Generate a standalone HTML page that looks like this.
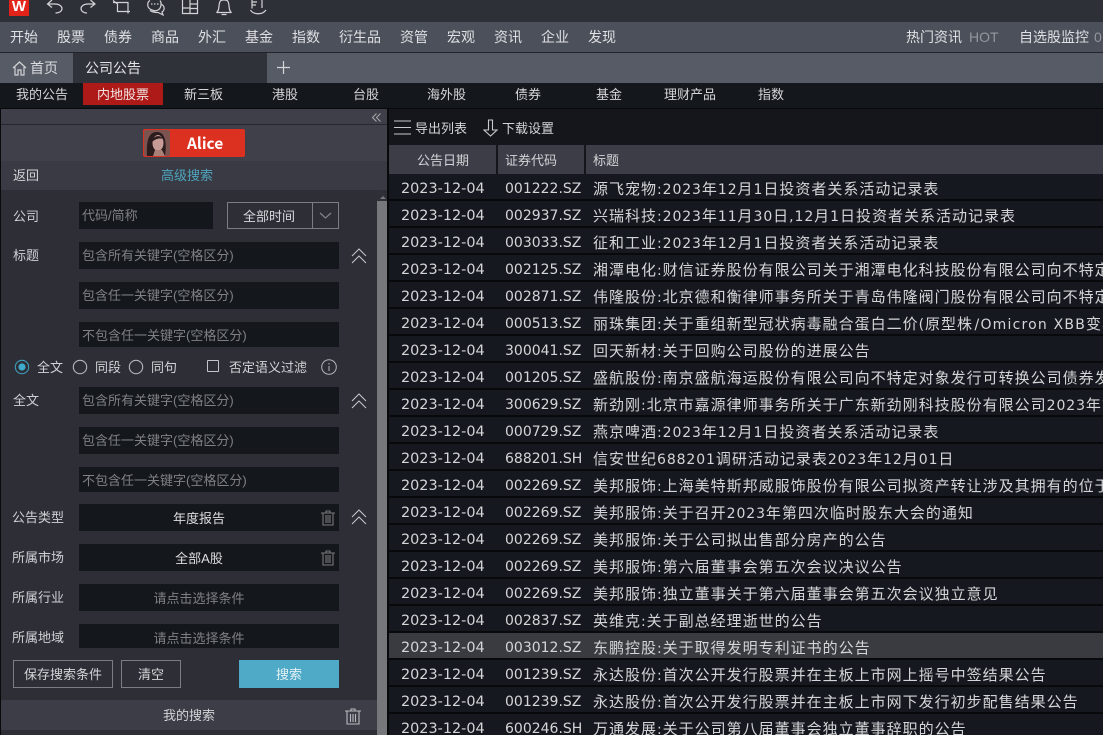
<!DOCTYPE html>
<html lang="zh"><head><meta charset="utf-8"><title>公司公告</title>
<style>
html,body{margin:0;padding:0;background:#000}
#p{position:relative;width:1103px;height:735px;overflow:hidden;background:#08090b;font-family:"Liberation Sans","Noto Sans CJK SC",sans-serif;font-size:13px;color:#d8d9dc}
#p div,#p span.a,#p svg{position:absolute}
.t{position:absolute;white-space:nowrap;line-height:18px;height:18px}
.m{top:28px;color:#dfe0e3;font-size:14px}
.s{top:86px;color:#d5d6d9}
.l{left:13px;color:#cfd0d4}
.i{left:79px;width:260px;background:#14171c;height:27px}
.ph{color:#7e8085;line-height:27px;white-space:nowrap;position:absolute;left:3px;top:0}
.c{color:#7e8085;line-height:27px;text-align:center;width:100%;position:absolute;left:0;top:0}
.r{left:389px;width:714px;height:25px;background:#15181e;font-family:"DejaVu Sans","Noto Sans CJK SC",sans-serif;font-size:14px;color:#d4d5d8;white-space:nowrap;line-height:25px}
.r span{position:absolute;top:3px}
.r .d{left:12px;font-size:14.4px}
.r .n{left:116px;font-size:14px}
.r .h{left:204px;font-size:15px;letter-spacing:1px}
.r .h i{font-style:normal;font-size:14px;letter-spacing:.9px}
.ic{fill:none;stroke:#d2d3d6;stroke-width:1.2}
</style></head><body><div id="p">

<div style="left:0;top:0;width:1103px;height:22px;background:#2d3037"></div>
<div style="left:9px;top:0;width:20px;height:16px;background:#e2231a;color:#fff;font:bold 15px/14px 'Liberation Sans',sans-serif;text-align:center">W</div>
<svg style="left:0;top:0" width="280" height="22" class="ic" viewBox="0 0 280 22">
<path d="M52 0 L47.5 4 L52 7.5 M48 4 H55 C59.5 4 62 6.5 62 8.5 C62 11 59.5 13 55.5 13"/>
<path d="M90.5 0 L95 4 L90.5 7.5 M94.5 4 H88 C83.5 4 81 6.5 81 8.5 C81 11 83.5 13 87 13"/>
<path d="M113 0.5 L117.5 4 V11.5 H130 M113 2.5 H128 V13.5"/>
<path d="M150 0.5 C147 2 147 7 150 9 C153 11 156 11 158 10 C161 8.5 162 3 160 0.5 M161 4 C165 6 165 10 162 12 L163 15 L158 12.5 C155 12.5 152 12 150 10.5 M151 4h1.5M154 4h1.5M157 4h1.5"/>
<path d="M182.5 0 V13.5 H197.5 V0 M190 0 V13.5 M190 4 H197.5 M190 8.5 H197.5 M182.5 8 H190"/>
<path d="M216.5 12.5 C219.5 11 218.5 6 219.5 3 C220 0.5 221 0 224 0 C227 0 228 0.5 228.5 3 C229.5 6 228.5 11 231.5 12.5 Z M221.5 14.5 H226.5"/>
<path d="M252 0 V8.5 M252 2 H257 M252 5 H256 M262 0 V8 M250.5 10 C253 14.5 262 15.5 266 10"/>
</svg>

<div style="left:0;top:22px;width:1103px;height:30px;background:#4b505a"></div>
<div style="left:0;top:52px;width:1103px;height:1px;background:#22242a"></div>
<span class="t m" style="left:10px">开始</span><span class="t m" style="left:57px">股票</span><span class="t m" style="left:104px">债券</span><span class="t m" style="left:151px">商品</span><span class="t m" style="left:198px">外汇</span><span class="t m" style="left:245px">基金</span><span class="t m" style="left:292px">指数</span><span class="t m" style="left:339px">衍生品</span><span class="t m" style="left:400px">资管</span><span class="t m" style="left:447px">宏观</span><span class="t m" style="left:494px">资讯</span><span class="t m" style="left:541px">企业</span><span class="t m" style="left:588px">发现</span>
<span class="t m" style="left:906px">热门资讯</span><span class="t m" style="left:969px;color:#94979d">HOT</span><span class="t m" style="left:1019px">自选股监控</span><span class="t m" style="left:1094px;color:#94979d">0</span>

<div style="left:0;top:53px;width:1103px;height:30px;background:#565b65"></div>
<div style="left:73px;top:53px;width:194px;height:30px;background:#2f3239"></div>
<svg style="left:12px;top:61px" width="15" height="15" class="ic" viewBox="0 0 15 15"><path d="M1 7 L7.5 1 L14 7 M3 6 V14 H6 V9 H9 V14 H12 V6"/></svg>
<span class="t" style="left:30px;top:59px;font-size:14px;color:#dadbde">首页</span>
<span class="t" style="left:85px;top:59px;font-size:14px;color:#e2e3e6">公司公告</span>
<svg style="left:277px;top:61px" width="13" height="13" viewBox="0 0 13 13"><path d="M6.5 0 V13 M0 6.5 H13" stroke="#d5d6d9" stroke-width="1.2"/></svg>

<div style="left:0;top:83px;width:1103px;height:25px;background:#14171c"></div>
<div style="left:83px;top:83px;width:80px;height:22px;background:#ad1a17"></div>
<span class="t s" style="left:16px">我的公告</span><span class="t s" style="left:97px;color:#f2e5e5">内地股票</span><span class="t s" style="left:184px">新三板</span><span class="t s" style="left:272px">港股</span><span class="t s" style="left:353px">台股</span><span class="t s" style="left:427px">海外股</span><span class="t s" style="left:515px">债券</span><span class="t s" style="left:596px">基金</span><span class="t s" style="left:664px">理财产品</span><span class="t s" style="left:758px">指数</span>

<div style="left:1px;top:109px;width:386px;height:15px;background:#3e3f48"></div>
<div style="left:1px;top:124px;width:386px;height:1px;background:#26272d"></div>
<svg style="left:372px;top:113px" width="9" height="9" viewBox="0 0 9 9"><path d="M4.5 0.5 L0.5 4.5 L4.5 8.5 M8.5 0.5 L4.5 4.5 L8.5 8.5" fill="none" stroke="#a9aaae" stroke-width="1"/></svg>
<div style="left:1px;top:125px;width:386px;height:36px;background:#3f4049"></div>
<div style="left:143px;top:129px;width:102px;height:28px;background:#dc3121;border-radius:2px"></div>
<svg style="left:144px;top:130px" width="26" height="26" viewBox="0 0 26 26"><rect width="26" height="26" rx="2" fill="#7d5350"/><path d="M3 26 C2 10 5 2 13 2 C21 2 23 12 21 26 Z" fill="#2b1c1e"/><ellipse cx="14" cy="13" rx="5.5" ry="8" fill="#c89c96"/><path d="M8 12 C9 6 15 4 20 9 C17 8 12 8 8 12Z" fill="#2b1c1e"/><path d="M11 20 L18 20 L21 26 H9Z" fill="#a98078"/></svg>
<span class="t" style="left:187px;top:134px;color:#fff;font:bold 15.5px/18px 'Noto Sans CJK SC','Liberation Sans',sans-serif">Alice</span>
<div style="left:1px;top:161px;width:386px;height:29px;background:#393a43"></div>
<span class="t" style="left:13px;top:167px;color:#d3d4d7">返回</span>
<span class="t" style="left:161px;top:167px;color:#4ea5bf">高级搜索</span>

<div style="left:1px;top:190px;width:376px;height:545px;background:#2d2e36"></div>
<div style="left:377px;top:190px;width:10px;height:545px;background:#76777a"></div>
<div style="left:377px;top:190px;width:10px;height:11px;background:#2f3037"></div>
<div style="left:380px;top:196px;width:0;height:0;border:3px solid transparent;border-top:0;border-bottom:3px solid #77787d"></div>

<span class="t l" style="top:208px">公司</span>
<div class="i" style="top:202px;width:134px"><span class="ph">代码/简称</span></div>
<div style="left:227px;top:202px;width:110px;height:25px;border:1px solid #7c7d82"></div>
<div style="left:312px;top:203px;width:1px;height:25px;background:#7c7d82"></div>
<span class="t" style="left:243px;top:208px;color:#d8d9dc">全部时间</span>
<svg style="left:319px;top:212px" width="13" height="8" viewBox="0 0 13 8"><path d="M1 1 L6.5 6 L12 1" fill="none" stroke="#85868a" stroke-width="1.2"/></svg>

<span class="t l" style="top:247px">标题</span>
<div class="i" style="top:242px"><span class="ph">包含所有关键字(空格区分)</span></div>
<div class="i" style="top:282px"><span class="ph">包含任一关键字(空格区分)</span></div>
<div class="i" style="top:322px;height:25px"><span class="ph">不包含任一关键字(空格区分)</span></div>
<svg style="left:351px;top:248px" width="16" height="16" viewBox="0 0 16 16"><path d="M1 8 L8 1 L15 8 M1 15 L8 8 L15 15" fill="none" stroke="#c9cacd" stroke-width="1"/></svg>

<svg style="left:14px;top:359px" width="16" height="16" viewBox="0 0 16 16"><circle cx="8" cy="8" r="6.7" fill="none" stroke="#3f9bb8" stroke-width="1.1"/><circle cx="8" cy="8" r="3.6" fill="#3fa9c9"/></svg>
<span class="t" style="left:37px;top:359px;color:#d3d4d7">全文</span>
<svg style="left:72px;top:359px" width="16" height="16" viewBox="0 0 16 16"><circle cx="8" cy="8" r="6.7" fill="none" stroke="#b5b6b9" stroke-width="1.1"/></svg>
<span class="t" style="left:95px;top:359px;color:#d3d4d7">同段</span>
<svg style="left:128px;top:359px" width="16" height="16" viewBox="0 0 16 16"><circle cx="8" cy="8" r="6.7" fill="none" stroke="#b5b6b9" stroke-width="1.1"/></svg>
<span class="t" style="left:151px;top:359px;color:#d3d4d7">同句</span>
<div style="left:207px;top:360px;width:10px;height:10px;border:1px solid #c5c6c9;border-radius:1px"></div>
<span class="t" style="left:229px;top:359px;color:#d3d4d7">否定语义过滤</span>
<svg style="left:320px;top:359px" width="18" height="16" viewBox="0 0 18 16"><circle cx="9" cy="8" r="7.3" fill="none" stroke="#b5b6b9" stroke-width="1"/><path d="M9 4 V5.5 M9 7 V12" stroke="#b5b6b9" stroke-width="1"/></svg>

<span class="t l" style="top:392px">全文</span>
<div class="i" style="top:387px"><span class="ph">包含所有关键字(空格区分)</span></div>
<div class="i" style="top:427px"><span class="ph">包含任一关键字(空格区分)</span></div>
<div class="i" style="top:467px;height:25px"><span class="ph">不包含任一关键字(空格区分)</span></div>
<svg style="left:351px;top:393px" width="16" height="16" viewBox="0 0 16 16"><path d="M1 8 L8 1 L15 8 M1 15 L8 8 L15 15" fill="none" stroke="#c9cacd" stroke-width="1"/></svg>

<span class="t l" style="left:12px;top:509px">公告类型</span>
<div class="i" style="top:504px"><span class="c" style="color:#dcdde0;left:-10px;top:1px;width:260px">年度报告</span></div>
<svg style="left:321px;top:510px" width="14" height="16" viewBox="0 0 14 16" fill="none" stroke="#77787c" stroke-width="1.1"><path d="M0 3 H14 M5 3 V1 H9 V3 M2 3 V15 H12 V3 M5 5 V13 M7 5 V13 M9 5 V13"/></svg>
<svg style="left:351px;top:509px" width="16" height="16" viewBox="0 0 16 16"><path d="M1 8 L8 1 L15 8 M1 15 L8 8 L15 15" fill="none" stroke="#c9cacd" stroke-width="1"/></svg>

<span class="t l" style="left:12px;top:549px">所属市场</span>
<div class="i" style="top:544px"><span class="c" style="color:#dcdde0;left:-10px;top:1px;width:260px">全部A股</span></div>
<svg style="left:321px;top:550px" width="14" height="16" viewBox="0 0 14 16" fill="none" stroke="#77787c" stroke-width="1.1"><path d="M0 3 H14 M5 3 V1 H9 V3 M2 3 V15 H12 V3 M5 5 V13 M7 5 V13 M9 5 V13"/></svg>

<span class="t l" style="left:12px;top:589px">所属行业</span>
<div class="i" style="top:584px"><span class="c" style="left:-10px;top:1px;width:260px">请点击选择条件</span></div>
<span class="t l" style="left:12px;top:629px">所属地域</span>
<div class="i" style="top:624px;height:24px"><span class="c" style="left:-10px;top:1px;width:260px">请点击选择条件</span></div>

<div style="left:13px;top:660px;width:98px;height:26px;border:1px solid #7c7d82;text-align:center;line-height:28px;color:#d3d4d7">保存搜索条件</div>
<div style="left:121px;top:660px;width:58px;height:26px;border:1px solid #7c7d82;text-align:center;line-height:28px;color:#d3d4d7">清空</div>
<div style="left:239px;top:660px;width:100px;height:28px;background:#4eaac7;text-align:center;line-height:29px;color:#e3f0f4">搜索</div>

<div style="left:1px;top:700px;width:376px;height:30px;background:#3c3d46"></div>
<span class="t" style="left:163px;top:707px;color:#d3d4d7">我的搜索</span>
<svg style="left:345px;top:708px" width="16" height="17" viewBox="0 0 16 17" fill="none" stroke="#b9babd" stroke-width="1.1"><path d="M0 3 H16 M6 3 V1 H10 V3 M2 3 V16 H14 V3 M5.5 6 V14 M8 6 V14 M10.5 6 V14"/></svg>

<div style="left:389px;top:109px;width:714px;height:36px;background:#14161b"></div>
<svg style="left:394px;top:120px" width="17" height="15" viewBox="0 0 17 15"><path d="M0 1 H17 M0 7.5 H17 M0 14 H17" stroke="#c9cacd" stroke-width="1.1"/></svg>
<span class="t" style="left:415px;top:120px;color:#d3d4d7">导出列表</span>
<svg style="left:483px;top:119px" width="15" height="18" viewBox="0 0 15 18"><path d="M5.5 1 H9.5 V11 H14 L7.5 17 L1 11 H5.5 Z" fill="none" stroke="#c9cacd" stroke-width="1.1"/></svg>
<span class="t" style="left:502px;top:120px;color:#d3d4d7">下载设置</span>

<div style="left:389px;top:145px;width:714px;height:29px;background:#3c3d46"></div>
<div style="left:496px;top:145px;width:2px;height:29px;background:#14161b"></div>
<div style="left:584px;top:145px;width:2px;height:29px;background:#14161b"></div>
<span class="t" style="left:417px;top:152px;color:#d3d4d7">公告日期</span>
<span class="t" style="left:505px;top:152px;color:#d3d4d7">证券代码</span>
<span class="t" style="left:593px;top:152px;color:#d3d4d7">标题</span>

<div class="r" style="top:174px"><span class="d">2023-12-04</span><span class="n">001222.SZ</span><span class="h">源飞宠物<i>:2023</i>年<i>12</i>月<i>1</i>日投资者关系活动记录表</span></div>
<div class="r" style="top:201px"><span class="d">2023-12-04</span><span class="n">002937.SZ</span><span class="h">兴瑞科技<i>:2023</i>年<i>11</i>月<i>30</i>日<i>,12</i>月<i>1</i>日投资者关系活动记录表</span></div>
<div class="r" style="top:228px"><span class="d">2023-12-04</span><span class="n">003033.SZ</span><span class="h">征和工业<i>:2023</i>年<i>12</i>月<i>1</i>日投资者关系活动记录表</span></div>
<div class="r" style="top:255px"><span class="d">2023-12-04</span><span class="n">002125.SZ</span><span class="h">湘潭电化<i>:</i>财信证券股份有限公司关于湘潭电化科技股份有限公司向不特定对象发行</span></div>
<div class="r" style="top:282px"><span class="d">2023-12-04</span><span class="n">002871.SZ</span><span class="h">伟隆股份<i>:</i>北京德和衡律师事务所关于青岛伟隆阀门股份有限公司向不特定对象发行</span></div>
<div class="r" style="top:309px"><span class="d">2023-12-04</span><span class="n">000513.SZ</span><span class="h">丽珠集团<i>:</i>关于重组新型冠状病毒融合蛋白二价<i>(</i>原型株<i style="letter-spacing:1.2px;margin-left:1.5px">/Omicron XBB</i>变异株<i>)</i></span></div>
<div class="r" style="top:336px"><span class="d">2023-12-04</span><span class="n">300041.SZ</span><span class="h">回天新材<i>:</i>关于回购公司股份的进展公告</span></div>
<div class="r" style="top:363px"><span class="d">2023-12-04</span><span class="n">001205.SZ</span><span class="h">盛航股份<i>:</i>南京盛航海运股份有限公司向不特定对象发行可转换公司债券发行提示</span></div>
<div class="r" style="top:390px"><span class="d">2023-12-04</span><span class="n">300629.SZ</span><span class="h">新劲刚<i>:</i>北京市嘉源律师事务所关于广东新劲刚科技股份有限公司<i>2023</i>年第一次</span></div>
<div class="r" style="top:417px"><span class="d">2023-12-04</span><span class="n">000729.SZ</span><span class="h">燕京啤酒<i>:2023</i>年<i>12</i>月<i>1</i>日投资者关系活动记录表</span></div>
<div class="r" style="top:444px"><span class="d">2023-12-04</span><span class="n">688201.SH</span><span class="h">信安世纪<i>688201</i>调研活动记录表<i>2023</i>年<i>12</i>月<i>01</i>日</span></div>
<div class="r" style="top:471px"><span class="d">2023-12-04</span><span class="n">002269.SZ</span><span class="h">美邦服饰<i>:</i>上海美特斯邦威服饰股份有限公司拟资产转让涉及其拥有的位于上海市</span></div>
<div class="r" style="top:498px"><span class="d">2023-12-04</span><span class="n">002269.SZ</span><span class="h">美邦服饰<i>:</i>关于召开<i>2023</i>年第四次临时股东大会的通知</span></div>
<div class="r" style="top:525px"><span class="d">2023-12-04</span><span class="n">002269.SZ</span><span class="h">美邦服饰<i>:</i>关于公司拟出售部分房产的公告</span></div>
<div class="r" style="top:552px"><span class="d">2023-12-04</span><span class="n">002269.SZ</span><span class="h">美邦服饰<i>:</i>第六届董事会第五次会议决议公告</span></div>
<div class="r" style="top:579px"><span class="d">2023-12-04</span><span class="n">002269.SZ</span><span class="h">美邦服饰<i>:</i>独立董事关于第六届董事会第五次会议独立意见</span></div>
<div class="r" style="top:606px"><span class="d">2023-12-04</span><span class="n">002837.SZ</span><span class="h">英维克<i>:</i>关于副总经理逝世的公告</span></div>
<div class="r" style="top:633px;background:#3a3b40"><span class="d">2023-12-04</span><span class="n">003012.SZ</span><span class="h">东鹏控股<i>:</i>关于取得发明专利证书的公告</span></div>
<div class="r" style="top:660px"><span class="d">2023-12-04</span><span class="n">001239.SZ</span><span class="h">永达股份<i>:</i>首次公开发行股票并在主板上市网上摇号中签结果公告</span></div>
<div class="r" style="top:687px"><span class="d">2023-12-04</span><span class="n">001239.SZ</span><span class="h">永达股份<i>:</i>首次公开发行股票并在主板上市网下发行初步配售结果公告</span></div>
<div class="r" style="top:714px"><span class="d">2023-12-04</span><span class="n">600246.SH</span><span class="h">万通发展<i>:</i>关于公司第八届董事会独立董事辞职的公告</span></div>

</div></body></html>
